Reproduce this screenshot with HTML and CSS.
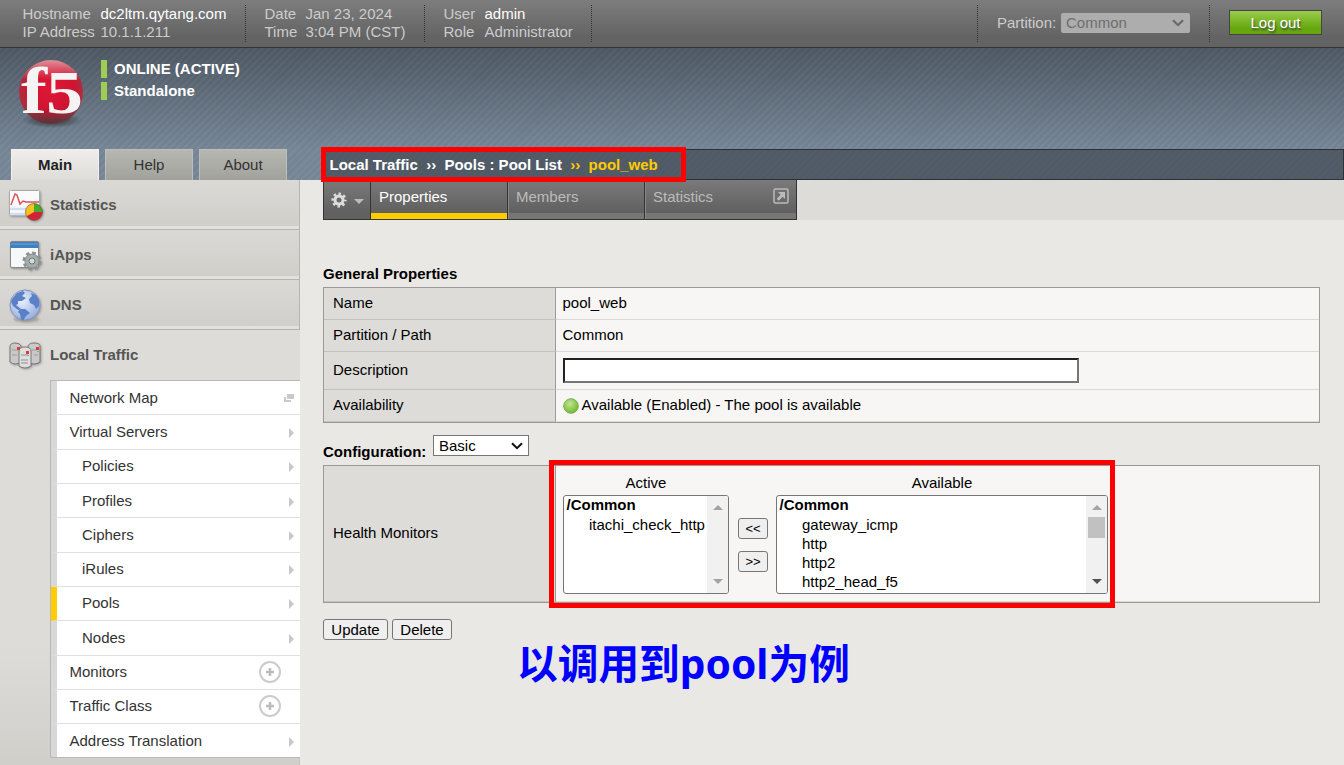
FILE: index.html
```html
<!DOCTYPE html>
<html lang="en">
<head>
<meta charset="utf-8">
<title>BIG-IP - pool_web</title>
<link rel="stylesheet" href="styles.css">
</head>
<body>
<header class="topbar">
  <dl class="info host"><dt>Hostname</dt><dd class="strong">dc2ltm.qytang.com</dd><dt>IP Address</dt><dd>10.1.1.211</dd></dl>
  <dl class="info date"><dt>Date</dt><dd>Jan 23, 2024</dd><dt>Time</dt><dd>3:04 PM (CST)</dd></dl>
  <dl class="info user"><dt>User</dt><dd class="strong">admin</dd><dt>Role</dt><dd>Administrator</dd></dl>
  <div class="partition"><span>Partition:</span>
    <div class="part-select">Common<svg width="12" height="8" viewBox="0 0 12 8"><path d="M1 1.2l5 5 5-5" fill="none" stroke="#666" stroke-width="2"/></svg></div>
  </div>
  <div class="logout-wrap"><button class="logout">Log out</button></div>
</header>

<section class="banner">
  <div class="brand">
    <svg class="logo" width="70" height="80" viewBox="0 0 70 80">
      <defs>
        <radialGradient id="ball" cx="50%" cy="45%" r="55%"><stop offset="0" stop-color="#e01735"/><stop offset=".65" stop-color="#cf1430"/><stop offset="1" stop-color="#a03845"/></radialGradient>
        <linearGradient id="shine" x1="0" y1="0" x2="0" y2="1"><stop offset="0" stop-color="#fff" stop-opacity=".5"/><stop offset=".3" stop-color="#fff" stop-opacity="0"/><stop offset=".75" stop-color="#333" stop-opacity="0"/><stop offset="1" stop-color="#333" stop-opacity=".7"/></linearGradient>
        <radialGradient id="shade"><stop offset="0" stop-color="#222" stop-opacity=".9"/><stop offset="1" stop-color="#222" stop-opacity="0"/></radialGradient>
      </defs>
      <ellipse cx="35" cy="62" rx="30" ry="8" fill="url(#shade)"/>
      <circle cx="34" cy="34" r="32" fill="url(#ball)"/><circle cx="34" cy="34" r="32" fill="url(#shine)"/>
      <text class="logo-text" x="4" y="55" textLength="26" lengthAdjust="spacingAndGlyphs">f</text>
      <text class="logo-text five" x="29" y="55" textLength="37" lengthAdjust="spacingAndGlyphs">5</text>
    </svg>
    <div class="status"><p>ONLINE (ACTIVE)</p><p>Standalone</p></div>
  </div>
  <nav class="side-tabs"><a class="on">Main</a><a>Help</a><a>About</a></nav>
  <div class="crumbs"><span>Local Traffic</span><i>››</i><span>Pools : Pool List</span><i class="cur">››</i><span class="cur">pool_web</span></div>
</section>

<div class="body">
  <aside class="sidebar">
    <a class="sect"><svg width="36" height="36" viewBox="0 0 36 36"><rect x="1.500" y="3.500" width="30" height="25" rx="1" fill="#fafafa" stroke="#aaa"/><path d="M2 22h29M2 27h29" stroke="#cfdff0" stroke-width="2.500"/><path d="M3 18l4-11 2 1 3 9 3-3 3 1h13" fill="none" stroke="#d9535c" stroke-width="1.500"/><circle cx="26" cy="25" r="8.500" fill="#d4213a"/><path d="M26 25V16.500a8.500 8.500 0 0 0-7.400 12.700z" fill="#f2c321"/><path d="M26 25V16.500a8.500 8.500 0 0 1 8.500 8.500z" fill="#3fae2e"/><circle cx="26" cy="25" r="8.500" fill="none" stroke="#665a24" stroke-opacity=".5"/></svg>Statistics</a>
    <a class="sect"><svg width="36" height="36" viewBox="0 0 36 36"><rect x="2.500" y="4.500" width="28" height="26" rx="1.500" fill="#f6f8fa" stroke="#888"/><path d="M2.500 5h28v6h-28z" fill="#3f80bf"/><path d="M3 7h27" stroke="#6ca5db"/><circle cx="24" cy="24" r="8" fill="none" stroke="#8b9292" stroke-width="3" stroke-dasharray="3.500 2.783"/><circle cx="24" cy="24" r="7" fill="#a4adad" stroke="#858c8c"/><circle cx="24" cy="24" r="3" fill="#d5d9d9" stroke="#737979"/></svg>iApps</a>
    <a class="sect"><svg width="36" height="36" viewBox="0 0 36 36"><defs><radialGradient id="sea" cx="40%" cy="35%" r="70%"><stop offset="0" stop-color="#e9f1fd"/><stop offset="1" stop-color="#92abde"/></radialGradient></defs><ellipse cx="18" cy="32" rx="13" ry="3" fill="#999" opacity=".4"/><circle cx="17" cy="18" r="15" fill="url(#sea)" stroke="#8496bd"/><path d="M4 12l5-6 6-2 2 2-3 3 4 2-4 3-4 0 0 3-2 1 5 4-3 1-5-4-2-4zM12 22l5 0 5 4-4 3-3 5-2-2-1-5-2-2zM23 6l5 2 3 5 0 6-3 3-2-4-4-2-1-4 3-3z" fill="#5c80c8"/></svg>DNS</a>
    <a class="sect open"><svg width="36" height="36" viewBox="0 0 36 36"><g stroke="#777"><path d="M2 10q0-4 5-4t6 3v16q-6 4-11 0z" fill="#c9c9c9"/><path d="M20 10q0-4 6-4t6 3v16q-6 4-12 0z" fill="#c9c9c9"/><path d="M11 14q0-4 6-4t6 4v15q-6 4-12 0z" fill="#dedede"/></g><path d="M4 13h6M24 13h5M13 18h7M4 18h5M26 18h4M13 23h7M13 26h7" stroke="#aaa" stroke-width="1.500"/><path d="M9 10h3v3h-3zM28 10h3v3h-3zM18 14h3v3h-3z" fill="#e33345"/><path d="M10 14h2v1h-2zM29 14h2v1h-2zM19 18h2v1h-2z" fill="#6cc56c"/></svg>Local Traffic</a>
    <nav class="submenu">
      <a>Network Map<svg class="win" width="10" height="8" viewBox="0 0 10 8"><path d="M3 0h7v5H3zM0 3h2v3h5v2H0z" fill="#c9c9c9"/></svg></a>
      <a>Virtual Servers<b class="arr"></b></a>
      <a class="sub">Policies<b class="arr"></b></a>
      <a class="sub">Profiles<b class="arr"></b></a>
      <a class="sub">Ciphers<b class="arr"></b></a>
      <a class="sub">iRules<b class="arr"></b></a>
      <a class="sub sel">Pools<b class="arr"></b></a>
      <a class="sub">Nodes<b class="arr"></b></a>
      <a>Monitors<svg class="plus" width="24" height="24" viewBox="0 0 24 24"><circle cx="12" cy="12" r="10" fill="none" stroke="#ccc" stroke-width="2"/><path d="M12 8v8M8 12h8" stroke="#bbb" stroke-width="2.500"/></svg></a>
      <a>Traffic Class<svg class="plus" width="24" height="24" viewBox="0 0 24 24"><circle cx="12" cy="12" r="10" fill="none" stroke="#ccc" stroke-width="2"/><path d="M12 8v8M8 12h8" stroke="#bbb" stroke-width="2.500"/></svg></a>
      <a>Address Translation<b class="arr"></b></a>
    </nav>
  </aside>

  <main class="main">
    <div class="tabstrip">
      <nav class="tabs">
        <a class="gear"><svg width="16" height="16" viewBox="0 0 16 16"><circle cx="8" cy="8" r="6.300" fill="none" stroke="#ddd" stroke-width="2.600" stroke-dasharray="2.500 2.448" stroke-dashoffset="1.250"/><circle cx="8" cy="8" r="4" fill="none" stroke="#ddd" stroke-width="3"/></svg><b class="down"></b></a>
        <a class="tab on">Properties</a><a class="tab">Members</a>
        <a class="tab wide">Statistics<svg width="16" height="16" viewBox="0 0 16 16"><rect x="1" y="1" width="14" height="14" rx="1.500" fill="none" stroke="#bbb" stroke-width="1.500"/><path d="M5 4h7v7l-2.300-2.300-4 4-2-2 4-4z" fill="#bbb"/></svg></a>
      </nav>
    </div>
    <div class="content">
      <h2>General Properties</h2>
      <div class="grid general">
        <div class="k">Name</div><div class="v">pool_web</div>
        <div class="k">Partition / Path</div><div class="v">Common</div>
        <div class="k">Description</div><div class="v field"><input class="desc" type="text"></div>
        <div class="k">Availability</div><div class="v"><svg class="dot" width="16" height="16" viewBox="0 0 16 16"><defs><radialGradient id="ok" cx="42%" cy="35%" r="65%"><stop offset="0" stop-color="#c4e594"/><stop offset="1" stop-color="#71b930"/></radialGradient></defs><circle cx="8" cy="8" r="7.300" fill="url(#ok)" stroke="#7fb055"/></svg>Available (Enabled) - The pool is available</div>
      </div>
      <div class="conf"><h2>Configuration:</h2><div class="basic">Basic<svg width="12" height="8" viewBox="0 0 12 8"><path d="M1 1.200l5 5 5-5" fill="none" stroke="#111" stroke-width="2"/></svg></div></div>
      <div class="grid health">
        <div class="k">Health Monitors</div>
        <div class="v monitors">
          <div class="pick active"><span>Active</span>
            <div class="list"><ul><li class="grp">/Common</li><li>itachi_check_http</li></ul><div class="bar"><b class="up"></b><b class="dn"></b></div></div></div>
          <div class="moves"><button>&lt;&lt;</button><button>&gt;&gt;</button></div>
          <div class="pick avail"><span>Available</span>
            <div class="list"><ul><li class="grp">/Common</li><li>gateway_icmp</li><li>http</li><li>http2</li><li>http2_head_f5</li></ul><div class="bar"><b class="up"></b><i class="thumb"></i><b class="dn dark"></b></div></div></div>
        </div>
      </div>
      <div class="actions"><button>Update</button><button class="del">Delete</button></div>
    </div>
  </main>
</div>
<div class="mark mark-crumbs"></div>
<div class="mark mark-monitors"></div>
<div class="note">以调用到pool为例</div>
</body>
</html>
```
FILE: styles.css
```css
* { box-sizing: border-box; }
body { margin: 0; width: 1344px; height: 765px; overflow: hidden; position: relative; display: flex; flex-direction: column; font: 15px/18px "Liberation Sans", Arial, sans-serif; color: #000; background: #eae8e4; }
h2, p, dl, dd, ul { margin: 0; padding: 0; }
h2 { font-size: 15px; line-height: 18px; }
button { font: inherit; padding: 0; }

.topbar { height: 48px; flex: none; display: flex; border-bottom: 1px solid #333; background: linear-gradient(#7d7d7d, #636363 80%); color: #ccc; padding-top: 5px; }
.info { display: grid; grid-template-rows: 18px 18px; height: 37px; border-right: 1px dotted #333; white-space: nowrap; }
.host { width: 246px; padding-left: 22.5px; grid-template-columns: 78px auto; }
.date { width: 179px; padding-left: 18.5px; grid-template-columns: 41px auto; }
.user { width: 167px; padding-left: 18.5px; grid-template-columns: 41px auto; }
.strong { color: #fff; }
.partition { margin-left: auto; width: 233px; height: 37px; border: 1px dotted #333; border-width: 0 1px; display: flex; padding: 8px 0 0 19px; }
.partition span { width: 64px; line-height: 20px; }
.part-select { width: 129px; height: 20px; background: #adadad; color: #6d6d6d; border-radius: 2px; line-height: 20px; padding: 0 6px 0 5px; display: flex; align-items: center; justify-content: space-between; }
.logout-wrap { width: 134px; padding: 5px 0 0 19px; }
.logout { width: 93px; height: 25px; border: 1px solid #444; background: linear-gradient(#9ccc4c, #66a80e 75%); color: #fff; text-shadow: 1px 2px 2px #444; line-height: 22px; }

.banner { height: 132px; flex: none; display: grid; grid-template-columns: 323px 1fr; grid-template-rows: 101px 31px; background: repeating-linear-gradient(135deg, rgba(255,255,255,.03) 0 2px, rgba(0,0,0,.015) 2px 5px), linear-gradient(#4d5863, #778798 78%); }
.brand { grid-column: 1 / 3; display: flex; padding: 10px 0 0 17px; }
.logo { overflow: visible; }
.logo-text { font: bold 66px "Liberation Serif", serif; fill: #f4f4f4; }
.logo-text.five { font-size: 62px; }
.status { padding: 2px 0 0 14px; font-weight: bold; color: #fff; }
.status p { border-left: 6px solid #9fcc52; padding-left: 7px; height: 18px; margin-bottom: 4px; }
.side-tabs { display: flex; gap: 6px; padding-left: 11px; }
.side-tabs a { width: 88px; border: 1px solid #bdbeb8; border-bottom: 0; background: linear-gradient(#b6b7b1, #a1a29c); color: #333; text-align: center; line-height: 30px; }
.side-tabs .on { background: linear-gradient(#f0eeec, #dddcd8); border-color: #f2f1ee; font-weight: bold; color: #222; }
.crumbs { border: 1px solid #2e3235; background: repeating-linear-gradient(135deg, #4e5a66 0 2px, #525b66 2px 5px); color: #fff; font-weight: bold; line-height: 30px; padding-left: 5.5px; display: flex; white-space: pre; }
.crumbs i { font-style: normal; margin: 0 8.3px; }
.crumbs .cur { color: #fc0; }

.body { display: flex; flex: 1; min-height: 0; }
.sidebar { width: 300px; flex: none; background: linear-gradient(#dddcd8 80%, #d0cfca); box-shadow: inset -1px 0 #c5c4c0; }
.sect { height: 50px; display: flex; align-items: center; padding-left: 8px; font-weight: bold; color: #555; background: linear-gradient(#dad9d5, #d0cfca 94%, #e2e1de 94%); border: 1px solid #b5b5b5; border-width: 0 1px 1px 0; }
.sect svg { margin-right: 6px; filter: drop-shadow(1px 1px 1px rgba(0,0,0,.3)); }
.sect.open { background: #dddcd8; border: 0; }
.submenu { margin-left: 50px; width: 250px; border: 1px solid #b8b8b8; border-right: 0; display: grid; grid-template-rows: 34px 35px 34px 34px 35px 34px 34px 35px 34px 34px 33px; }
.submenu a { border-left: 6px solid #d8d8d8; border-bottom: 1px solid #e0e0e0; background: #fff; color: #333; padding: 0 6px 0 12.5px; display: flex; align-items: center; justify-content: space-between; }
.submenu a:nth-child(3n), .submenu a:nth-child(7), .submenu a:nth-child(10) { padding-bottom: 2px; }
.submenu a:last-child { border-bottom: 0; }
.submenu .sub { padding-left: 25px; }
.submenu .sel { border-left-color: #fc0; }
.arr { border: 5px solid transparent; border-left-color: #c8c8c8; border-right: 0; margin-top: 2px; }
.submenu .plus { margin: 1px 12px 0 0; }

.main { flex: 1; min-width: 0; }
.tabstrip { height: 40px; background: #dddcd8; padding-left: 23px; box-shadow: inset 23px 0 #eae8e4; }
.tabs { width: 474px; height: 40px; border: 1px solid #333; border-top: 0; display: flex; background: linear-gradient(#7a7a7a, #616161 80%); color: #bbb; }
.gear { width: 47px; display: flex; align-items: center; gap: 7px; padding-left: 7px; border-right: 1px solid #333; }
.down { border: 5px solid transparent; border-top-color: #bbb; border-bottom: 0; margin-top: 3px; }
.tab { width: 137px; border-right: 1px solid #333; border-left: 1px solid #888; padding: 8px 0 0 7px; box-shadow: inset 0 -6px #767676; }
.tab.on { color: #fff; border-left: 0; padding-left: 8px; box-shadow: inset 0 -6px #fc0; }
.tab.wide { width: auto; flex: 1; border-right: 0; display: flex; justify-content: space-between; padding-right: 7px; }

.content { padding: 45px 24px 0 23px; }
.grid { border: 1px solid #999; display: grid; grid-template-columns: 232px 1fr; }
.general { margin-top: 4px; grid-template-rows: 32px 32px 38px 32px; height: 136px; }
.k { background: #dddcd8; border-right: 1px solid #999; border-bottom: 1px solid #c3c2bf; padding: 0 0 2px 9px; display: flex; align-items: center; }
.v { background: #f7f6f4; border-bottom: 1px solid #dbdad7; padding: 0 0 2px 6.5px; display: flex; align-items: center; }
.v.field { padding: 0 0 0 7px; }
.desc { width: 516px; height: 25px; border: 2px inset #767676; background: #fff; padding: 0; }
.dot { margin: 2px 3px 0 0; }
.conf { display: flex; height: 42px; padding-top: 12px; }
.conf h2 { padding-top: 8px; width: 110px; }
.basic { width: 96px; height: 21px; border: 1px solid #767676; background: #fff; padding: 0 5px; display: flex; align-items: center; justify-content: space-between; }
.health { height: 138px; }
.monitors { align-items: flex-start; padding: 0 0 0 7px; }
.pick { padding-top: 8px; display: flex; flex-direction: column; align-items: center; }
.active { width: 166px; }
.avail { width: 332px; }
.list { margin-top: 3px; width: 100%; height: 99px; border: 1px solid #767676; border-radius: 3px; background: #fff; display: flex; overflow: hidden; }
.list ul { flex: 1; list-style: none; white-space: nowrap; padding-left: 2.5px; min-width: 0; }
.list li { height: 19px; line-height: 19px; padding-left: 22.5px; }
.list .grp { padding-left: 0; font-weight: bold; line-height: 18px; }
.bar { width: 21px; background: #f1f1f1; display: flex; flex-direction: column; align-items: center; padding: 9px 0 9px; }
.up, .dn { border: 5px solid transparent; }
.up { border-bottom-color: #a3a3a3; border-top: 0; }
.dn { border-top-color: #a3a3a3; border-bottom: 0; margin-top: auto; }
.dn.dark { border-top-color: #505050; }
.thumb { width: 17px; height: 21px; background: #c1c1c1; margin-top: 7px; }
.moves { width: 47px; padding: 52px 8px 0 9px; display: flex; flex-direction: column; gap: 12px; }
.moves button, .actions button { height: 21px; border: 1px solid #767676; border-radius: 3px; background: #efefef; color: #000; }
.moves button { font-size: 13px; line-height: 18px; }
.actions { padding-top: 16px; display: flex; gap: 4px; }
.actions button { width: 65px; }
.actions .del { width: 60px; }

.mark { position: absolute; border: 5px solid #f00; }
.mark-crumbs { left: 321px; top: 147px; width: 365px; height: 35px; }
.mark-monitors { left: 549px; top: 460px; width: 566px; height: 148px; }
.note { position: absolute; left: 517px; top: 633px; font: bold 40.7px/60px "Noto Sans", "Noto Sans CJK SC", sans-serif; color: #00f; white-space: nowrap; }
```
